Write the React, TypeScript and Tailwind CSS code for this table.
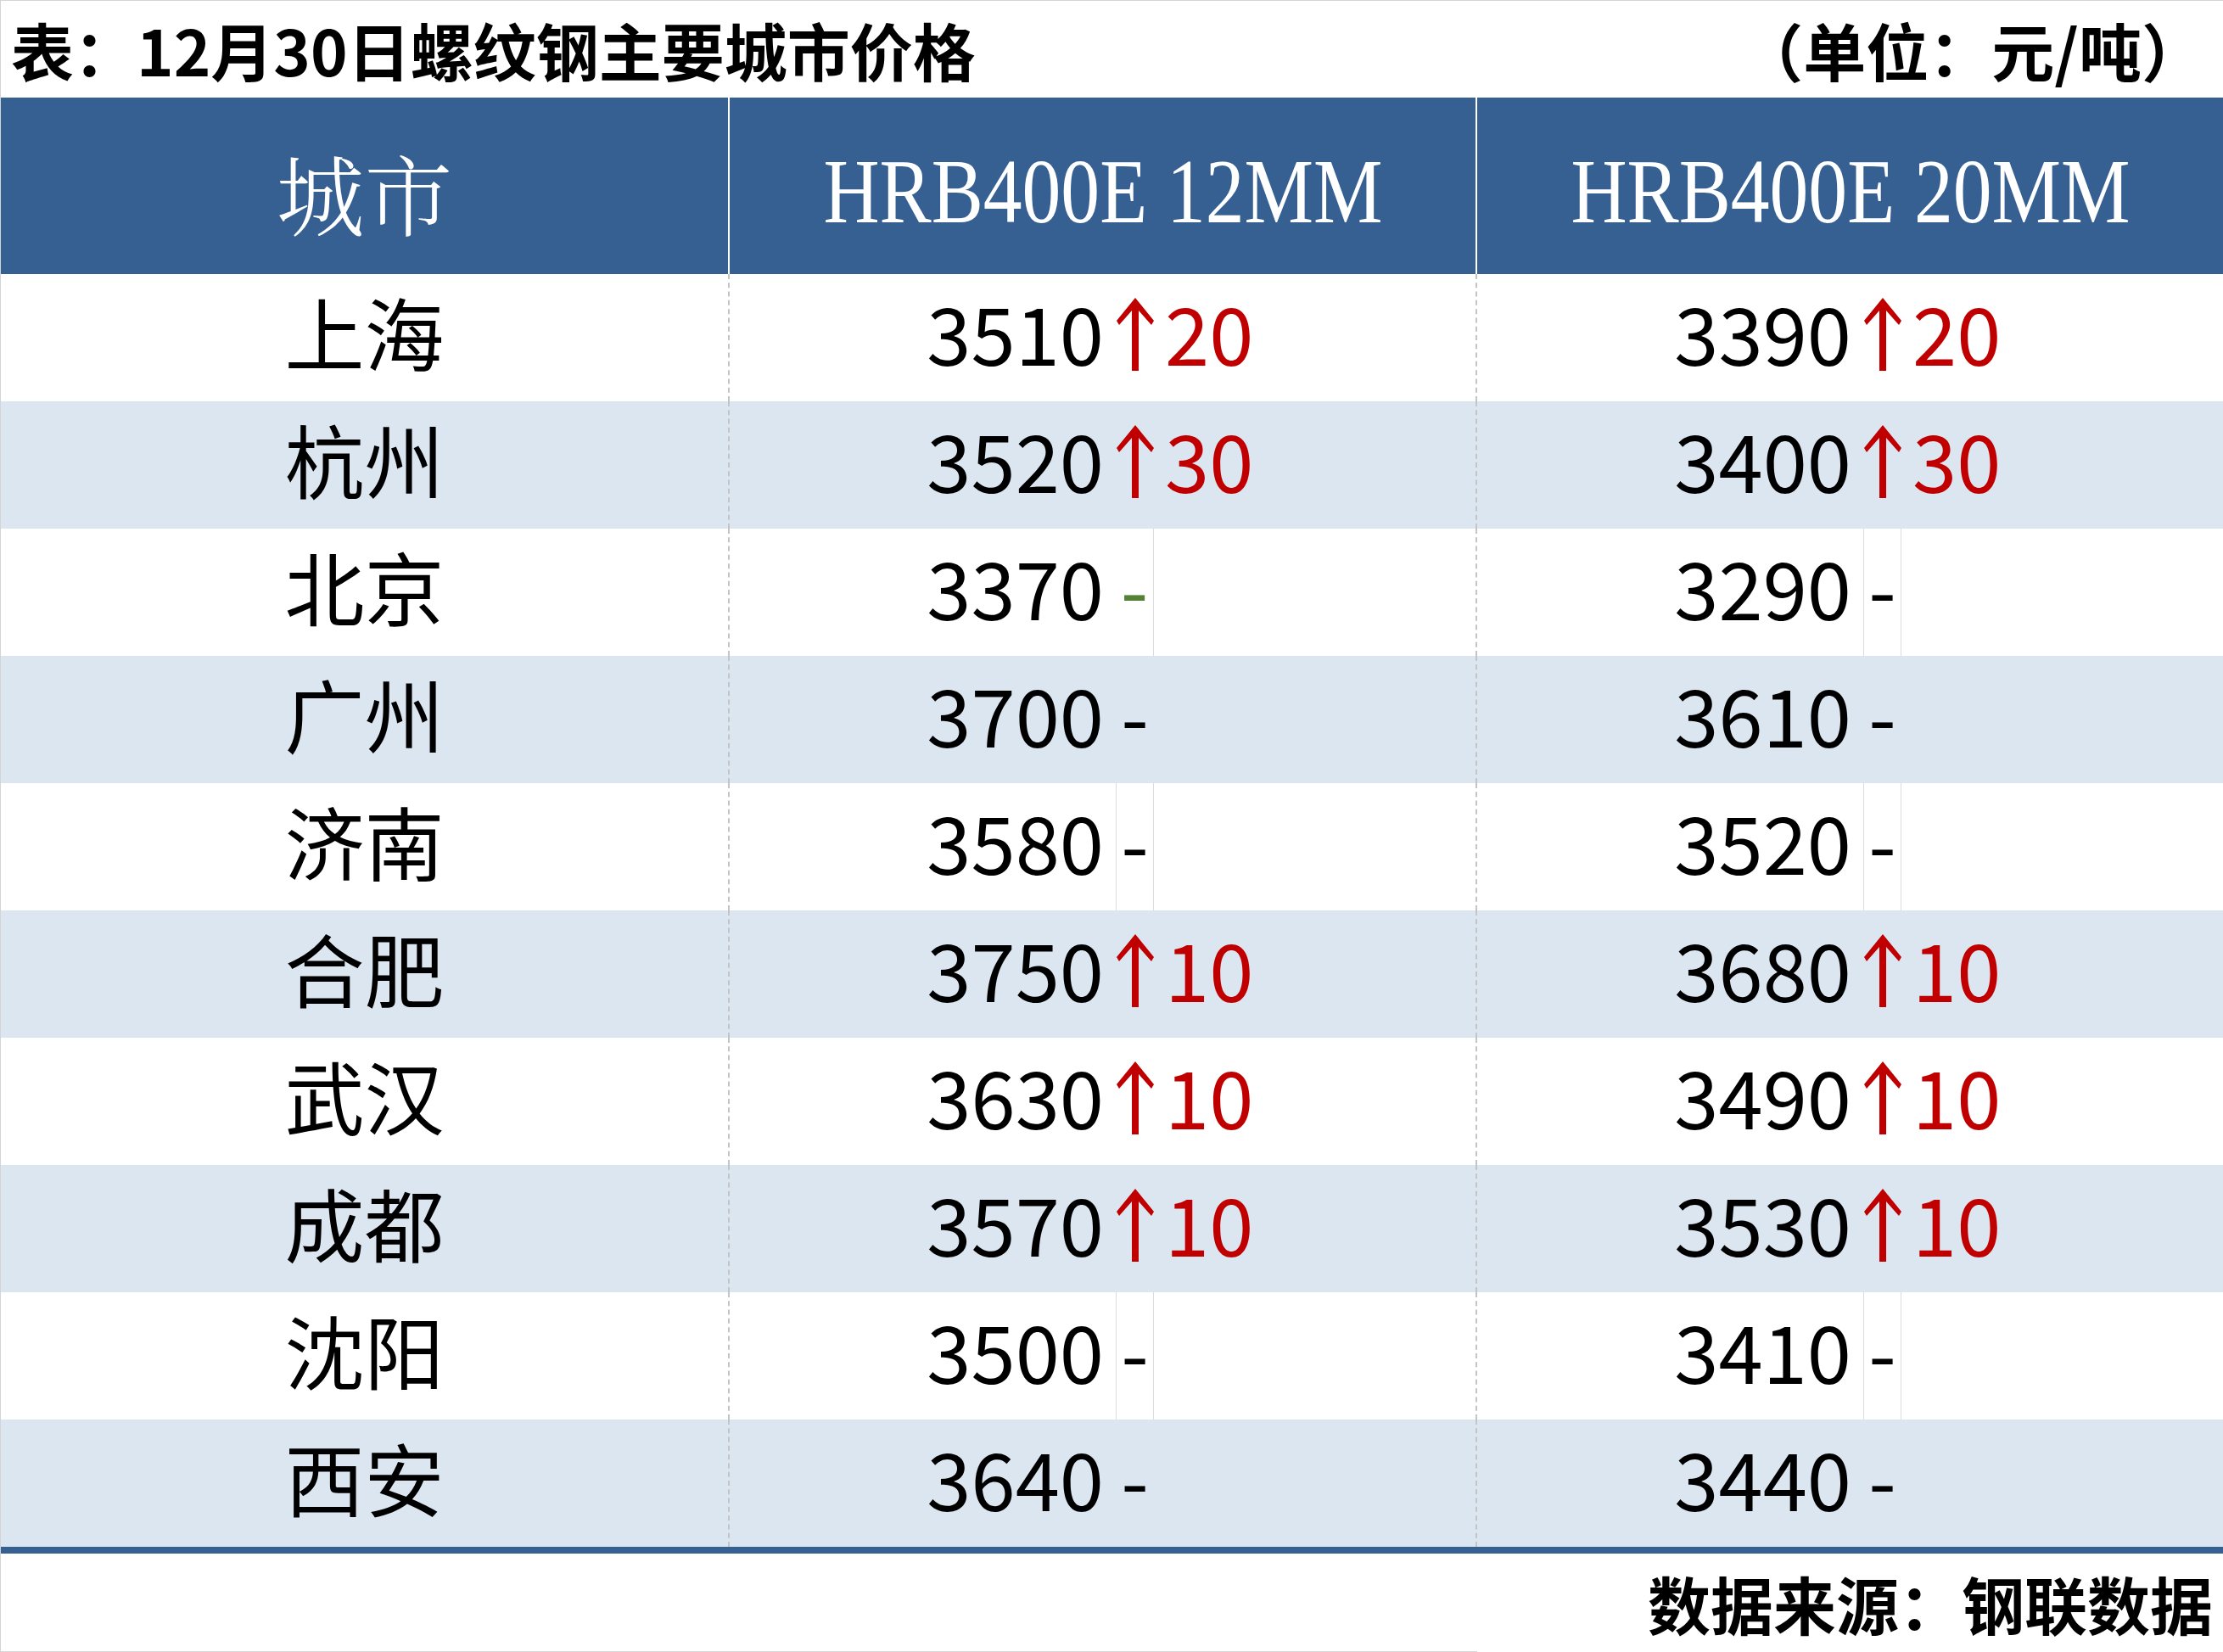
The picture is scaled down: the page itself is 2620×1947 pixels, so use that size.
import React from 'react';
import clsx from 'clsx';

type Cell = { price: string; change?: string; green?: boolean; grid?: 'lr' | 'r' };
type Row = { city: string; a: Cell; b: Cell };

const rows: Row[] = [
  { city: '上海', a: { price: '3510', change: '20' }, b: { price: '3390', change: '20' } },
  { city: '杭州', a: { price: '3520', change: '30' }, b: { price: '3400', change: '30' } },
  { city: '北京', a: { price: '3370', green: true, grid: 'r' }, b: { price: '3290', grid: 'lr' } },
  { city: '广州', a: { price: '3700' }, b: { price: '3610' } },
  { city: '济南', a: { price: '3580', grid: 'lr' }, b: { price: '3520', grid: 'lr' } },
  { city: '合肥', a: { price: '3750', change: '10' }, b: { price: '3680', change: '10' } },
  { city: '武汉', a: { price: '3630', change: '10' }, b: { price: '3490', change: '10' } },
  { city: '成都', a: { price: '3570', change: '10' }, b: { price: '3530', change: '10' } },
  { city: '沈阳', a: { price: '3500', grid: 'lr' }, b: { price: '3410', grid: 'lr' } },
  { city: '西安', a: { price: '3640' }, b: { price: '3440' } },
];

const UpArrow = () => (
  <svg width="44" height="86" viewBox="0 0 44 86" className="-mt-[8px]">
    <path d="M22 0 L44 27 L41 32 L26 15 L26 86 L18 86 L18 15 L3 32 L0 27 Z" fill="#c00000" />
  </svg>
);

const PriceCell = ({ cell }: { cell: Cell }) => (
  <div className="grid grid-cols-[455px_45px_1fr] h-full border-l-2 border-dashed border-[#c4c4c4]">
    <div className="flex items-center justify-end pr-[14px] pb-[16px]">{cell.price}</div>
    <div
      className={clsx(
        'flex items-center justify-center',
        cell.grid === 'lr' && 'border-x border-[#dcdcdc]',
        cell.grid === 'r' && 'border-r border-[#dcdcdc]'
      )}
    >
      {cell.change ? (
        <UpArrow />
      ) : (
        <span className={clsx('pb-[16px]', cell.green ? 'text-[#538135]' : 'text-black')}>-</span>
      )}
    </div>
    <div className="flex items-center pl-[13px] pb-[16px] text-[#c00000]">{cell.change}</div>
  </div>
);

export default function App() {
  return (
    <div className="w-[2620px] h-[1947px] bg-white text-black border-l border-t border-[#d4d4d4] font-['Noto_Sans_CJK_SC','Noto_Sans',sans-serif] overflow-hidden">
      {/* title */}
      <div className="h-[114px] flex items-center justify-between pl-[12px] pr-[22px] text-[74px] font-bold leading-none">
        <span>表：12月30日螺纹钢主要城市价格</span>
        <span>（单位：元/吨）</span>
      </div>

      {/* header */}
      <div className="h-[208px] grid grid-cols-[857px_881px_881px] bg-[#366092] text-white leading-none">
        <div className="flex items-center justify-center pt-[14px] text-[104px] font-light font-['Noto_Serif_CJK_SC','Noto_Sans_CJK_SC',serif]">
          城市
        </div>
        <div className="flex items-center justify-center pt-[14px] border-l-2 border-white font-['Liberation_Serif',serif] text-[107px]">
          <span className="inline-block scale-x-[0.856] whitespace-pre">HRB400E 12MM</span>
        </div>
        <div className="flex items-center justify-center pt-[14px] border-l-2 border-white font-['Liberation_Serif',serif] text-[107px]">
          <span className="inline-block scale-x-[0.856] whitespace-pre">HRB400E 20MM</span>
        </div>
      </div>

      {/* rows */}
      <div className="flex flex-col text-[94px] leading-none">
        {rows.map((r, i) => (
          <div
            key={r.city}
            className={clsx(
              'h-[150px] grid grid-cols-[857px_881px_881px]',
              i % 2 === 1 ? 'bg-[#dce6f1]' : 'bg-white'
            )}
          >
            <div className="flex items-center justify-center pb-[16px]">{r.city}</div>
            <PriceCell cell={r.a} />
            <PriceCell cell={r.b} />
          </div>
        ))}
      </div>
      <div className="h-[8px] bg-[#366092]" />

      {/* footer */}
      <div className="h-[115px] flex items-center justify-end pr-[12px] text-[74px] font-bold leading-none">
        数据来源：钢联数据
      </div>
      <div className="h-px w-[1740px] bg-[#d9d9d9]" />
    </div>
  );
}
